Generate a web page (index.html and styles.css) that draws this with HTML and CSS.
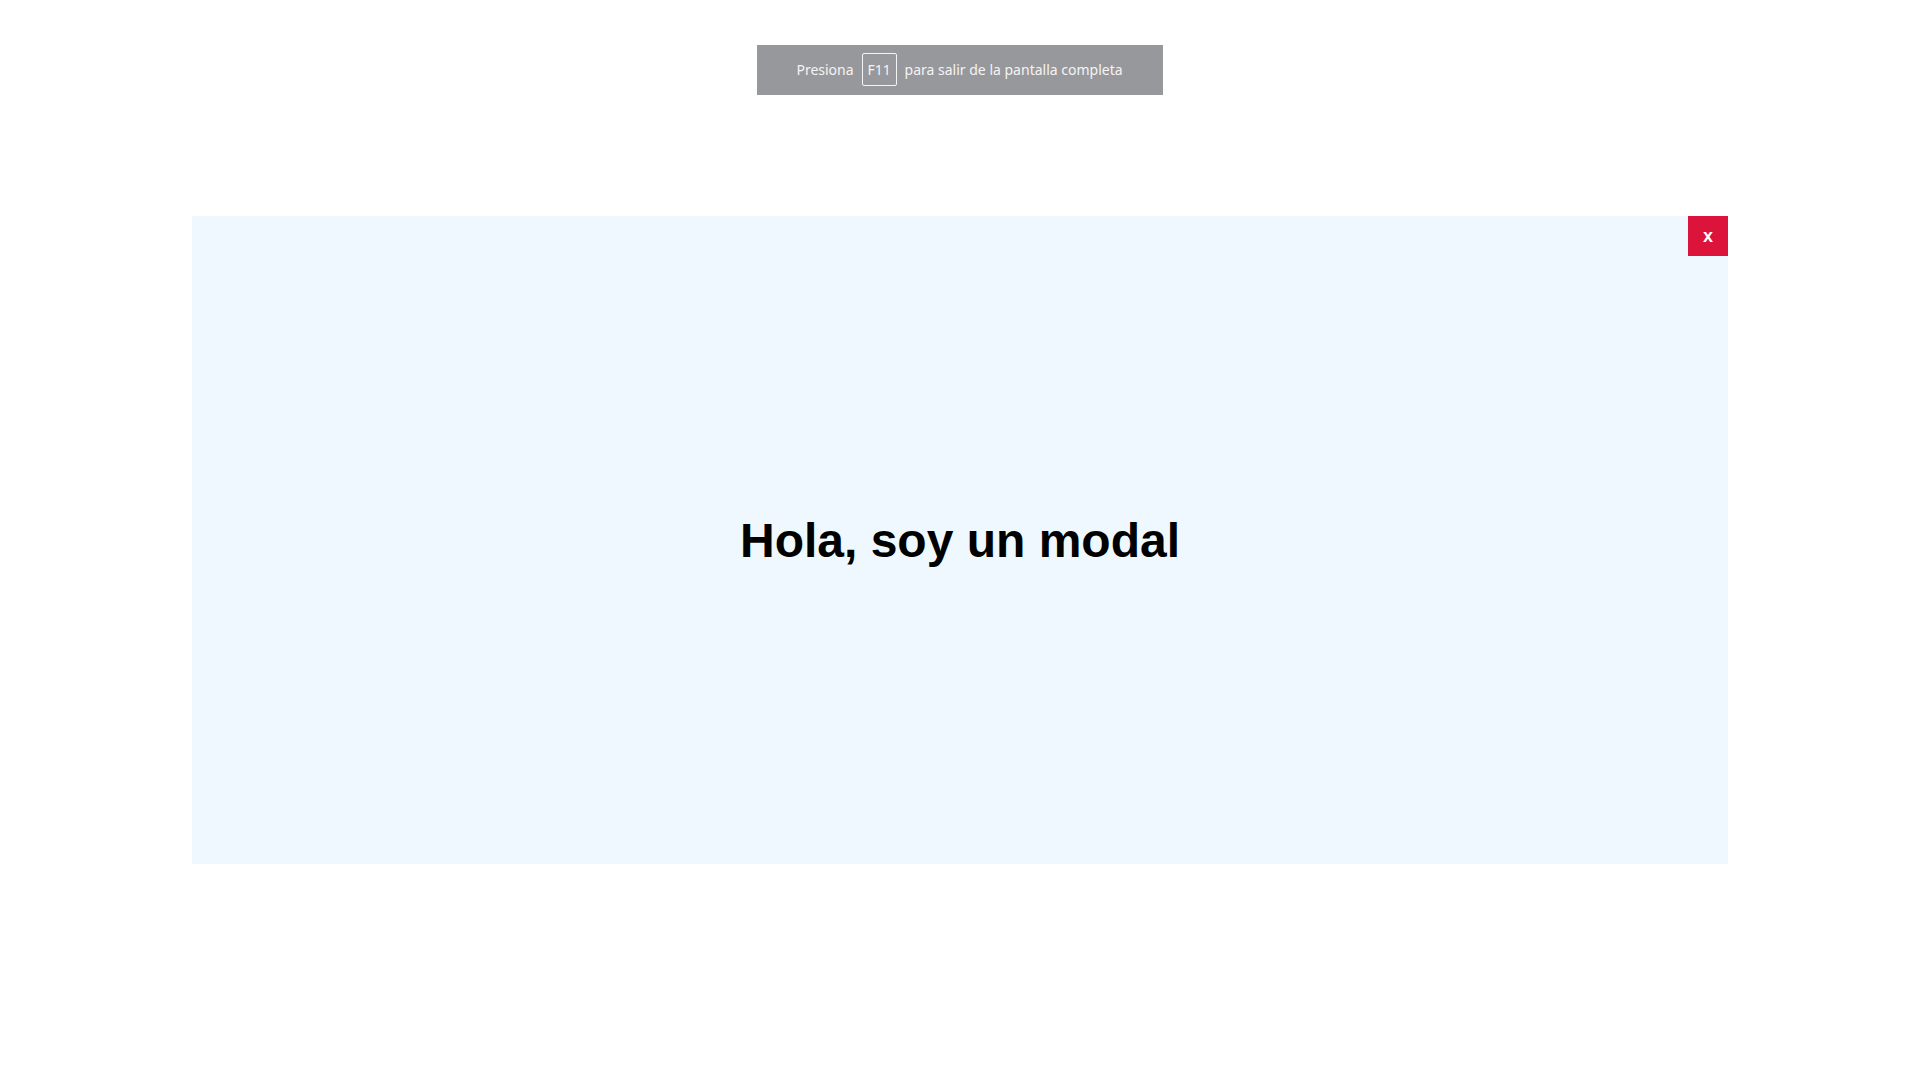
FILE: index.html
```html
<!DOCTYPE html>
<html lang="es">
<head>
<meta charset="utf-8">
<title>Modal</title>
<link rel="stylesheet" href="styles.css">
</head>
<body>
<div class="page">
  <div class="fs-notice">
    <span>Presiona</span>
    <span class="key">F11</span>
    <span>para salir de la pantalla completa</span>
  </div>
  <div class="modal">
    <button class="close">x</button>
    <h1 class="title">Hola, soy un modal</h1>
  </div>
</div>
</body>
</html>
```
FILE: styles.css
```css
html, body {
  margin: 0;
  padding: 0;
  background: #ffffff;
}
.page {
  width: 1920px;
  height: 1080px;
  display: flex;
  align-items: center;
  justify-content: center;
  position: relative;
  font-family: "Liberation Sans", Arial, sans-serif;
}
.fs-notice {
  position: absolute;
  top: 45px;
  left: 757px;
  width: 406px;
  height: 50px;
  box-sizing: border-box;
  background: #97989c;
  color: #f4f4f4;
  font-family: "Noto Sans", "Open Sans", sans-serif;
  font-size: 14px;
  display: flex;
  align-items: center;
  justify-content: center;
  gap: 8px;
  padding-bottom: 2px;
  padding-right: 1px;
}
.key {
  display: inline-flex;
  align-items: center;
  justify-content: center;
  width: 35px;
  height: 33px;
  box-sizing: border-box;
  border: 1px solid #f4f4f4;
  border-radius: 2px;
}
.modal {
  position: relative;
  width: 1536px;
  height: 648px;
  background: #f0f8ff;
  display: flex;
  align-items: center;
  justify-content: center;
}
.title {
  margin: 0;
  font-size: 48px;
  font-weight: bold;
  color: #000;
}
.close {
  position: absolute;
  top: 0;
  right: 0;
  width: 40px;
  height: 40px;
  border: none;
  margin: 0;
  padding: 0;
  background: #dc143c;
  color: #fff;
  font-family: "Liberation Sans", Arial, sans-serif;
  font-weight: bold;
  font-size: 18px;
}
```
